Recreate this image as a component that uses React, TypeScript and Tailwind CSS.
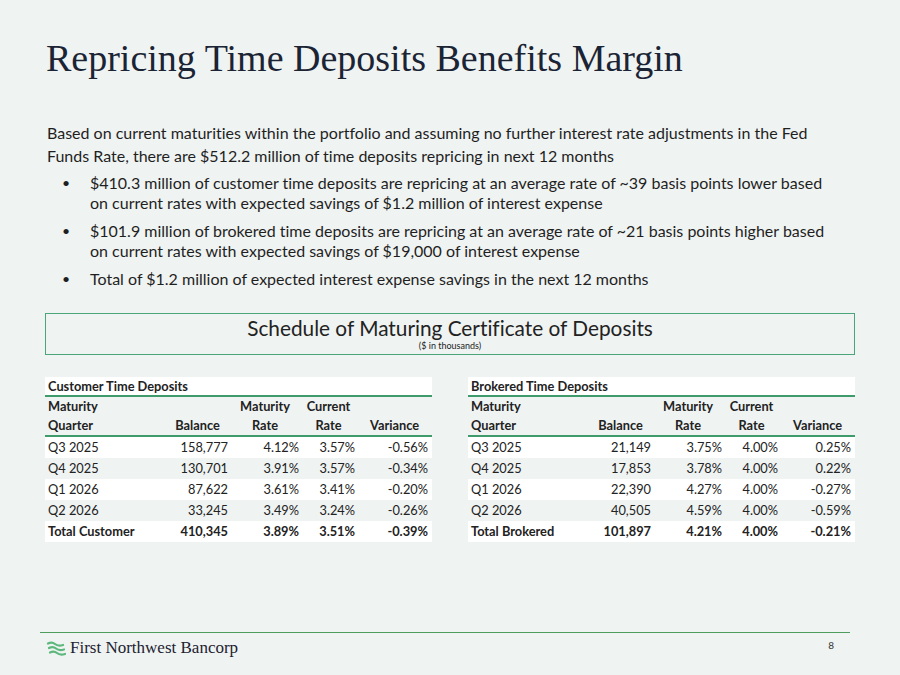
import React from "react";

type Row = { q: string; bal: string; mat: string; cur: string; vr: string };

const customer: Row[] = [
  { q: "Q3 2025", bal: "158,777", mat: "4.12%", cur: "3.57%", vr: "-0.56%" },
  { q: "Q4 2025", bal: "130,701", mat: "3.91%", cur: "3.57%", vr: "-0.34%" },
  { q: "Q1 2026", bal: "87,622", mat: "3.61%", cur: "3.41%", vr: "-0.20%" },
  { q: "Q2 2026", bal: "33,245", mat: "3.49%", cur: "3.24%", vr: "-0.26%" },
];

const brokered: Row[] = [
  { q: "Q3 2025", bal: "21,149", mat: "3.75%", cur: "4.00%", vr: "0.25%" },
  { q: "Q4 2025", bal: "17,853", mat: "3.78%", cur: "4.00%", vr: "0.22%" },
  { q: "Q1 2026", bal: "22,390", mat: "4.27%", cur: "4.00%", vr: "-0.27%" },
  { q: "Q2 2026", bal: "40,505", mat: "4.59%", cur: "4.00%", vr: "-0.59%" },
];

const cols = "grid grid-cols-[120px_65px_70px_57px_75px]";

function DepositTable({ title, rows, total }: { title: string; rows: Row[]; total: Row }) {
  return (
    <div className="w-[387px] text-[12.8px] text-[#222]">
      <div className="h-[18px] bg-white pl-[3px] font-bold leading-[18px]">{title}</div>
      <div className="h-[2px] bg-[#3f9a6c]" />
      <div className={`${cols} font-bold leading-[19px]`}>
        <div className="pl-[3px]">Maturity</div>
        <div />
        <div className="text-center">Maturity</div>
        <div className="text-center">Current</div>
        <div />
        <div className="pl-[3px]">Quarter</div>
        <div className="text-center">Balance</div>
        <div className="text-center">Rate</div>
        <div className="text-center">Rate</div>
        <div className="text-center">Variance</div>
      </div>
      <div className="h-[2px] bg-[#3f9a6c]" />
      {rows.map((r, i) => (
        <div key={r.q} className={`${cols} h-[21px] leading-[21px] ${i % 2 === 0 ? "bg-white" : ""}`}>
          <div className="pl-[3px]">{r.q}</div>
          <div className="pr-[2px] text-right">{r.bal}</div>
          <div className="pr-[1px] text-right">{r.mat}</div>
          <div className="pr-[2px] text-right">{r.cur}</div>
          <div className="pr-[4px] text-right">{r.vr}</div>
        </div>
      ))}
      <div className={`${cols} h-[21px] bg-white font-bold leading-[21px]`}>
        <div className="pl-[3px]">{total.q}</div>
        <div className="pr-[2px] text-right">{total.bal}</div>
        <div className="pr-[1px] text-right">{total.mat}</div>
        <div className="pr-[2px] text-right">{total.cur}</div>
        <div className="pr-[4px] text-right">{total.vr}</div>
      </div>
    </div>
  );
}

function Logo() {
  return (
    <div className="flex items-center gap-[4px] pl-[6px]">
      <svg width="20" height="15" viewBox="0 0 20 15" fill="none" stroke="#5cb87c" strokeWidth="2.2" strokeLinecap="round">
        <path d="M2 2.5 Q6 0.5 9 3 T17 4" />
        <path d="M3 7 Q7 5 10 7.5 T18 8.5" />
        <path d="M4 11.5 Q8 9.5 11 12 T19 13" />
      </svg>
      <span className="font-['Liberation_Serif',serif] text-[17px] leading-[18px] text-[#1d2230]">
        First Northwest Bancorp
      </span>
    </div>
  );
}

export default function App() {
  return (
    <div className="flex h-[675px] w-[900px] flex-col overflow-hidden bg-[#eff3f2] font-['Lato',sans-serif] [font-variant-ligatures:none]">
      <h1 className="pl-[46px] pt-[36px] font-['Liberation_Serif',serif] text-[38px] leading-[44px] text-[#1b2434]">
        Repricing Time Deposits Benefits Margin
      </h1>

      <div className="mt-[41px] pl-[47px] pr-[60px] text-[16px] text-[#1f1f1f]">
        <p className="leading-[23px]">
          Based on current maturities within the portfolio and assuming no further interest rate adjustments in the Fed
          Funds Rate, there are $512.2 million of time deposits repricing in next 12 months
        </p>
        <ul className="mt-[6px] flex flex-col gap-[8px] leading-[20px]">
          <li className="flex">
            <span className="w-[43px] shrink-0 pl-[15px] text-[14px]">•</span>
            <span>
              $410.3 million of customer time deposits are repricing at an average rate of ~39 basis points lower based
              on current rates with expected savings of $1.2 million of interest expense
            </span>
          </li>
          <li className="flex">
            <span className="w-[43px] shrink-0 pl-[15px] text-[14px]">•</span>
            <span>
              $101.9 million of brokered time deposits are repricing at an average rate of ~21 basis points higher based
              on current rates with expected savings of $19,000 of interest expense
            </span>
          </li>
          <li className="flex">
            <span className="w-[43px] shrink-0 pl-[15px] text-[14px]">•</span>
            <span>Total of $1.2 million of expected interest expense savings in the next 12 months</span>
          </li>
        </ul>
      </div>

      <div className="ml-[45px] mt-[24px] flex h-[42px] w-[810px] flex-col items-center border border-[#4aa57a] text-[#222]">
        <div className="pt-[2px] text-[20.8px] leading-[24px]">Schedule of Maturing Certificate of Deposits</div>
        <div className="text-[9px] leading-[12px]">($ in thousands)</div>
      </div>

      <div className="ml-[45px] mt-[22px] flex gap-[36px]">
        <DepositTable
          title="Customer Time Deposits"
          rows={customer}
          total={{ q: "Total Customer", bal: "410,345", mat: "3.89%", cur: "3.51%", vr: "-0.39%" }}
        />
        <DepositTable
          title="Brokered Time Deposits"
          rows={brokered}
          total={{ q: "Total Brokered", bal: "101,897", mat: "4.21%", cur: "4.00%", vr: "-0.21%" }}
        />
      </div>

      <div className="mx-[40px] mt-auto flex h-[43px] w-[810px] items-start justify-between border-t border-[#4e9d5e] pt-[6px]">
        <Logo />
        <span className="pr-[16px] text-[10px] leading-[12px] text-[#333]">8</span>
      </div>
    </div>
  );
}
